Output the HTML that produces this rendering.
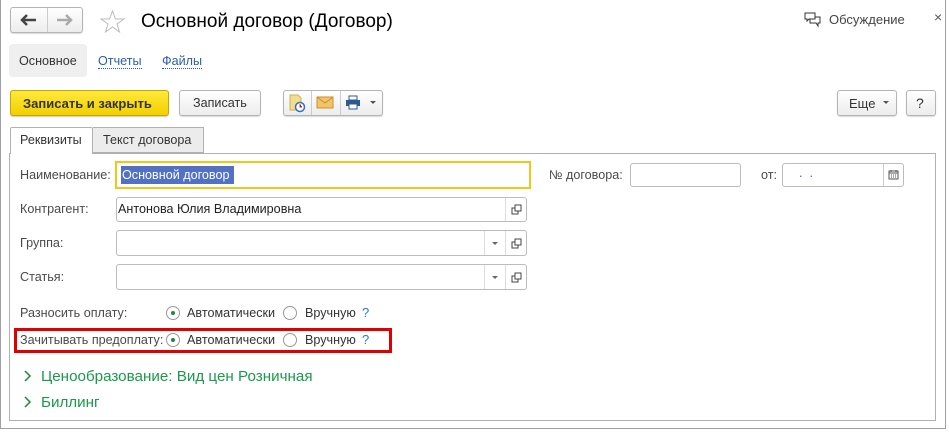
<!DOCTYPE html>
<html><head><meta charset="utf-8"><style>
*{box-sizing:border-box;margin:0;padding:0}
body{width:949px;height:433px;background:#fff;font-family:"Liberation Sans",Arial,sans-serif;font-size:12.6px;color:#333;position:relative;overflow:hidden}
.a{position:absolute}
.btn{position:absolute;border:1px solid #b5b5b5;border-radius:3px;background:linear-gradient(#fff,#ececec);box-shadow:0 1px 1px rgba(0,0,0,.15)}
.inp{position:absolute;border:1px solid #bcbcbc;border-radius:3px;background:#fff}
.lbl{position:absolute;color:#4a4a4a;font-size:12.6px}
.radio{position:absolute;width:14px;height:14px;border:1px solid #999;border-radius:50%;background:#fff}
.radio.on::after{content:"";position:absolute;left:4px;top:4px;width:4px;height:4px;border-radius:50%;background:#1b8a3c}
.green{position:absolute;color:#1a9a4a;font-size:15.2px}
</style></head><body>
<div class="a" style="left:0;top:0;width:946px;height:429px;border-right:1px solid #a0a0a0;border-bottom:1px solid #a0a0a0;border-left:1px solid #a0a0a0"></div>

<div class="btn" style="left:10px;top:7px;width:73px;height:26px"></div>
<div class="a" style="left:47px;top:8px;width:1px;height:24px;background:#ccc"></div>
<svg class="a" style="left:20px;top:13px" width="18" height="14"><path d="M2 7H16M7 2L2 7L7 12" stroke="#444" stroke-width="2.5" fill="none"/></svg>
<svg class="a" style="left:56px;top:13px" width="18" height="14"><path d="M1 7H15M10 2L15 7L10 12" stroke="#aaa" stroke-width="2.5" fill="none"/></svg>
<svg class="a" style="left:100px;top:10px" width="25" height="24"><path d="M12.5 1L15.5 9H24L17 14L19.5 22L12.5 17L5.5 22L8 14L1 9H9.5Z" stroke="#bbb" fill="none"/></svg>
<div class="a" style="left:141px;top:11px;font-size:19px;color:#000">Основной договор (Договор)</div>
<svg class="a" style="left:804px;top:12px" width="17" height="16"><path d="M1 1H11V7H5L3 9V7H1Z M6 7V11H12L14 14V11H16V5H11" stroke="#333" fill="none"/></svg>
<div class="a" style="left:829px;top:12px;color:#444;font-size:13px">Обсуждение</div>
<div class="a" style="left:934px;top:9px;color:#555;font-size:14px">×</div>

<div class="a" style="left:9px;top:44px;width:78px;height:33px;background:#efefef;border-radius:4px"></div>
<div class="a" style="left:19px;top:54px;color:#333">Основное</div>
<div class="a" style="left:98px;top:54px;color:#2a5db0;border-bottom:1px dotted #2a5db0;line-height:14px">Отчеты</div>
<div class="a" style="left:162px;top:54px;color:#2a5db0;border-bottom:1px dotted #2a5db0;line-height:14px">Файлы</div>

<div class="a" style="left:10px;top:90px;width:159px;height:26px;border:1px solid #c4a800;border-radius:3px;background:linear-gradient(#ffe93a,#f2cf00);box-shadow:0 1px 1px rgba(0,0,0,.2)"></div>
<div class="a" style="left:23px;top:96px;font-weight:bold;color:#333;font-size:13px">Записать и закрыть</div>
<div class="btn" style="left:179px;top:90px;width:82px;height:26px"></div>
<div class="a" style="left:193px;top:96px;color:#333">Записать</div>
<div class="btn" style="left:283px;top:90px;width:100px;height:26px"></div>
<div class="a" style="left:311px;top:91px;width:1px;height:24px;background:#ccc"></div>
<div class="a" style="left:340px;top:91px;width:1px;height:24px;background:#ccc"></div>
<svg class="a" style="left:288px;top:94px" width="20" height="19"><path d="M2 1H10L13 4V16H2Z" fill="#f3dc8c" stroke="#c9b060"/><circle cx="12" cy="13" r="4.5" fill="#fff" stroke="#3a6cc0" stroke-width="1.5"/><path d="M12 10V13H14" stroke="#d03030"/></svg>
<svg class="a" style="left:316px;top:96px" width="18" height="13"><rect x="1" y="1" width="16" height="11" fill="#f2c46a" stroke="#c89030"/><path d="M1 1L9 7L17 1" stroke="#c89030" fill="none"/></svg>
<svg class="a" style="left:345px;top:95px" width="16" height="15"><rect x="4" y="1" width="8" height="4" fill="#fff" stroke="#2c5a90"/><rect x="1" y="5" width="14" height="6" fill="#2c5a90"/><rect x="4" y="9" width="8" height="5" fill="#fff" stroke="#2c5a90"/></svg>
<div class="a" style="left:370px;top:101px;border:3px solid transparent;border-top:3px solid #555"></div>

<div class="btn" style="left:837px;top:90px;width:60px;height:26px"></div>
<div class="a" style="left:849px;top:96px;color:#333;font-size:13px">Еще</div>
<div class="a" style="left:883px;top:101px;border:3px solid transparent;border-top:3px solid #555"></div>
<div class="btn" style="left:906px;top:90px;width:30px;height:26px"></div>
<div class="a" style="left:916px;top:95px;color:#333;font-size:14px">?</div>

<div class="a" style="left:9px;top:153px;width:927px;height:268px;border:1px solid #b0b0b0"></div>
<div class="a" style="left:10px;top:127px;width:83px;height:27px;border:1px solid #b0b0b0;border-bottom:none;background:#fff;border-radius:2px 2px 0 0"></div>
<div class="a" style="left:20px;top:133px;color:#333">Реквизиты</div>
<div class="a" style="left:93px;top:127px;width:111px;height:26px;border:1px solid #b0b0b0;border-left:none;background:#ececec"></div>
<div class="a" style="left:103px;top:133px;color:#333">Текст договора</div>

<div class="lbl" style="left:20px;top:168px">Наименование:</div>
<div class="a" style="left:115px;top:161px;width:416px;height:28px;border:2px solid #f5c518"></div>
<div class="a" style="left:121px;top:166px;width:113px;height:18px;background:#5270c4"></div>
<div class="a" style="left:122px;top:168px;color:#fff">Основной договор</div>

<div class="lbl" style="left:549px;top:168px">№ договора:</div>
<div class="inp" style="left:630px;top:163px;width:111px;height:24px"></div>
<div class="lbl" style="left:761px;top:168px">от:</div>
<div class="inp" style="left:782px;top:163px;width:122px;height:24px"></div>
<div class="a" style="left:883px;top:164px;width:1px;height:22px;background:#ccc"></div>
<div class="a" style="left:792px;top:166px;color:#3a6cc0">&nbsp;&nbsp;.&nbsp;&nbsp;.</div>
<svg class="a" style="left:888px;top:169px" width="11" height="11"><rect x="1" y="2" width="9" height="8" fill="none" stroke="#555"/><path d="M1 4H10M3 1V3M8 1V3M3 6h1M5 6h1M7 6h1M3 8h1M5 8h1M7 8h1" stroke="#555"/></svg>

<div class="lbl" style="left:20px;top:202px">Контрагент:</div>
<div class="inp" style="left:116px;top:197px;width:411px;height:25px;background:#fff"></div>
<div class="a" style="left:505px;top:198px;width:1px;height:23px;background:#ddd"></div>
<div class="a" style="left:118px;top:202px;color:#222">Антонова Юлия Владимировна</div>

<div class="lbl" style="left:20px;top:236px">Группа:</div>
<div class="inp" style="left:116px;top:230px;width:411px;height:26px"></div>
<div class="a" style="left:484px;top:231px;width:1px;height:24px;background:#ddd"></div>
<div class="a" style="left:505px;top:231px;width:1px;height:24px;background:#ddd"></div>
<div class="a" style="left:492px;top:242px;border:3px solid transparent;border-top:3px solid #666"></div>

<div class="lbl" style="left:20px;top:270px">Статья:</div>
<div class="inp" style="left:116px;top:264px;width:411px;height:26px"></div>
<div class="a" style="left:484px;top:265px;width:1px;height:24px;background:#ddd"></div>
<div class="a" style="left:505px;top:265px;width:1px;height:24px;background:#ddd"></div>
<div class="a" style="left:492px;top:276px;border:3px solid transparent;border-top:3px solid #666"></div>

<svg class="a" style="left:511px;top:204px" width="11" height="11"><path d="M4 1H10V7H4Z M4 4H1V10H7V7" stroke="#444" fill="none"/></svg>
<svg class="a" style="left:511px;top:238px" width="11" height="11"><path d="M4 1H10V7H4Z M4 4H1V10H7V7" stroke="#444" fill="none"/></svg>
<svg class="a" style="left:511px;top:272px" width="11" height="11"><path d="M4 1H10V7H4Z M4 4H1V10H7V7" stroke="#444" fill="none"/></svg>

<div class="lbl" style="left:20px;top:306px">Разносить оплату:</div>
<div class="radio on" style="left:166px;top:306px"></div>
<div class="a" style="left:187px;top:306px;color:#333">Автоматически</div>
<div class="radio" style="left:283px;top:306px"></div>
<div class="a" style="left:305px;top:306px;color:#333">Вручную</div>
<div class="a" style="left:362px;top:305px;color:#2a7ad0;font-size:13px">?</div>

<div class="a" style="left:14px;top:328px;width:378px;height:25px;border:3px solid #e00000"></div>
<div class="lbl" style="left:20px;top:333px">Зачитывать предоплату:</div>
<div class="radio on" style="left:166px;top:333px"></div>
<div class="a" style="left:187px;top:333px;color:#333">Автоматически</div>
<div class="radio" style="left:283px;top:333px"></div>
<div class="a" style="left:305px;top:333px;color:#333">Вручную</div>
<div class="a" style="left:362px;top:332px;color:#2a7ad0;font-size:13px">?</div>

<svg class="a" style="left:24px;top:370px" width="8" height="12"><path d="M1 1L6 6L1 11" stroke="#1a8a3a" stroke-width="1.5" fill="none"/></svg>
<div class="green" style="left:41px;top:368px">Ценообразование: Вид цен Розничная</div>
<svg class="a" style="left:24px;top:396px" width="8" height="12"><path d="M1 1L6 6L1 11" stroke="#1a8a3a" stroke-width="1.5" fill="none"/></svg>
<div class="green" style="left:41px;top:394px">Биллинг</div>
</body></html>
